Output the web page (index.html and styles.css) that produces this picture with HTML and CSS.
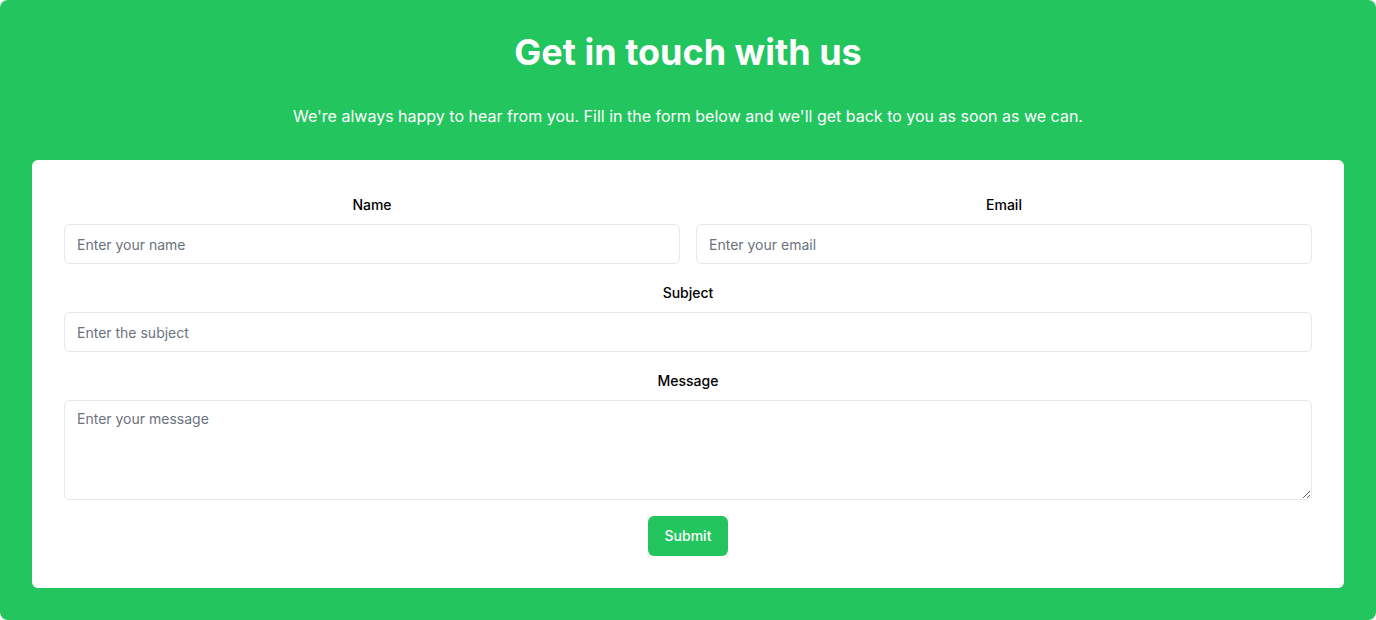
FILE: index.html
```html
<!DOCTYPE html>
<html lang="en">
<head>
<meta charset="utf-8">
<title>Get in touch with us</title>
<link rel="stylesheet" href="styles.css">
</head>
<body>
<section class="contact">
  <h1 class="contact-title">Get in touch with us</h1>
  <p class="contact-lead">We're always happy to hear from you. Fill in the form below and we'll get back to you as soon as we can.</p>
  <form class="card">
    <div class="row">
      <div class="field">
        <label class="label" for="name">Name</label>
        <input class="input" id="name" type="text" placeholder="Enter your name">
      </div>
      <div class="field">
        <label class="label" for="email">Email</label>
        <input class="input" id="email" type="email" placeholder="Enter your email">
      </div>
    </div>
    <div class="field">
      <label class="label" for="subject">Subject</label>
      <input class="input" id="subject" type="text" placeholder="Enter the subject">
    </div>
    <div class="field">
      <label class="label" for="message">Message</label>
      <textarea class="input textarea" id="message" placeholder="Enter your message"></textarea>
    </div>
    <div class="actions">
      <button class="submit" type="button">Submit</button>
    </div>
  </form>
</section>
</body>
</html>
```
FILE: styles.css
```css
* { box-sizing: border-box; }
html, body { margin: 0; background: #ffffff; }
body { font-family: Inter, "Noto Sans", "Liberation Sans", sans-serif; }

.contact {
  background: #22c55e;
  border-radius: 8px;
  padding: 32px;
  height: 620px;
  text-align: center;
  color: #ffffff;
}
.contact-title {
  margin: 0 0 32px;
  font-size: 36px;
  line-height: 40px;
  font-weight: 700;
}
.contact-lead {
  margin: 0 0 32px;
  font-size: 16px;
  line-height: 24px;
}
.card {
  background: #ffffff;
  border-radius: 6px;
  padding: 32px;
  color: #111827;
}
.row {
  display: grid;
  grid-template-columns: 1fr 1fr;
  gap: 16px;
}
.field { margin-bottom: 16px; }
.label {
  display: block;
  font-size: 14px;
  line-height: 25px;
  font-weight: 500;
  margin-bottom: 7px;
  color: #000000;
}
.input {
  display: block;
  width: 100%;
  height: 40px;
  padding: 8px 12px;
  border: 1px solid #e5e7eb;
  border-radius: 6px;
  font-family: inherit;
  font-size: 14px;
  line-height: 20px;
  color: #111827;
  background: #ffffff;
}
.input::placeholder { color: #6b7280; }
.textarea { height: 100px; resize: vertical; }
.actions { display: flex; justify-content: center; }
.submit {
  height: 40px;
  padding: 0 17px 2px;
  border: 0;
  border-radius: 6px;
  background: #22c55e;
  color: #ffffff;
  font-family: inherit;
  font-size: 14px;
  font-weight: 500;
}
```
